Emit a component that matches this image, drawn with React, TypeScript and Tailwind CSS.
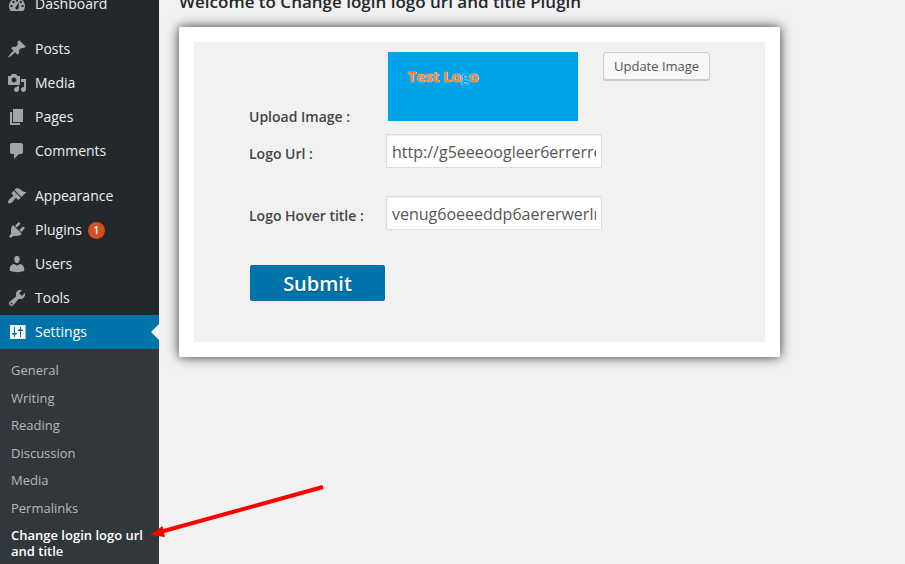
import type { ReactNode } from "react";

type Item = { label: string; icon: ReactNode; badge?: string; active?: boolean };

const groups: Item[][] = [
  [
    {
      label: "Dashboard",
      icon: (
        <path
          fillRule="evenodd"
          d="M3.76 17h12.480A7.950 7.950 0 0 0 18 12c0-4.420-3.580-8-8-8s-8 3.580-8 8c0 1.880.65 3.630 1.760 5zM9 5.500h2v2H9zM5.500 7h2v2h-2zM12.800 7h2v2h-2zM3.500 11h2v2h-2zM14.500 11h2v2h-2zM12 8.500l-.4 5.200c0 1-.7 1.800-1.600 1.800s-1.600-.8-1.600-1.600c0-.6.2-1 .6-1.300z"
        />
      ),
    },
  ],
  [
    {
      label: "Posts",
      icon: (
        <path d="M10.440 3.020l1.820-1.820 6.360 6.350-1.830 1.820c-1.050-.68-2.480-.57-3.410.36l-.75.75c-.92.93-1.040 2.350-.35 3.410l-1.830 1.820-2.410-2.410-2.800 2.790c-.42.42-3.380 2.710-3.800 2.290s1.860-3.390 2.280-3.810l2.790-2.790L4.100 9.360l1.830-1.820c1.050.69 2.480.57 3.400-.36l.75-.75c.93-.92 1.050-2.350.36-3.410z" />
      ),
    },
    {
      label: "Media",
      icon: (
        <path d="M13 11V4c0-.55-.45-1-1-1h-1.670L9 1H5L3.670 3H2c-.55 0-1 .45-1 1v7c0 .55.45 1 1 1h10c.55 0 1-.45 1-1zM7 4.500c1.380 0 2.500 1.120 2.500 2.500S8.380 9.500 7 9.500 4.500 8.380 4.500 7 5.620 4.500 7 4.500zM14 6h5v10.500c0 1.380-1.120 2.500-2.500 2.500S14 17.880 14 16.500s1.120-2.500 2.500-2.500c.17 0 .34.02.5.05V9h-3V6zm-4 8.050V13h2v3.500c0 1.380-1.120 2.500-2.500 2.500S7 17.880 7 16.500 8.120 14 9.500 14c.17 0 .34.02.5.05z" />
      ),
    },
    { label: "Pages", icon: <path d="M6 15V2h10v13H6zm-1 1h8v2H3V5h2v11z" /> },
    {
      label: "Comments",
      icon: (
        <path d="M5 2h9c1.100 0 2 .9 2 2v7c0 1.100-.9 2-2 2h-2l-5 5v-5H5c-1.100 0-2-.9-2-2V4c0-1.100.9-2 2-2z" />
      ),
    },
  ],
  [
    {
      label: "Appearance",
      icon: (
        <path d="M14.480 11.060L7.410 3.990l1.500-1.500c.5-.56 2.300-.47 3.510.32 1.210.8 1.430 1.280 2.910 2.100 1.180.64 2.450 1.260 4.450.85zm-.71.71L6.700 4.700 4.930 6.470c-.39.39-.39 1.020 0 1.410l1.060 1.060c.39.39.39 1.030 0 1.420-.6.6-1.430 1.110-2.210 1.690-.35.26-.7.53-1.010.84C1.430 14.230.4 16.080 1.400 17.070c.99 1 2.840-.03 4.180-1.360.31-.31.58-.66.85-1.020.57-.78 1.080-1.610 1.690-2.210.39-.39 1.020-.39 1.410 0l1.060 1.060c.39.39 1.020.39 1.410 0z" />
      ),
    },
    {
      label: "Plugins",
      badge: "1",
      icon: (
        <path d="M13.110 4.360L9.870 7.600 8 5.730l3.240-3.240c.35-.34 1.050-.2 1.560.32.52.51.66 1.210.31 1.550zm-8 1.770l.91-1.120 9.010 9.010-1.190.84c-.71.71-2.630 1.160-3.820 1.160H6.140L4.900 17.260c-.59.59-1.540.59-2.120 0-.59-.58-.59-1.530 0-2.120l1.240-1.240v-3.880c0-1.130.4-3.190 1.090-3.890zm7.260 3.970l3.240-3.240c.34-.35 1.040-.21 1.550.31.52.51.66 1.210.31 1.550l-3.240 3.250z" />
      ),
    },
    {
      label: "Users",
      icon: (
        <path d="M10 9.250c-2.270 0-2.730-3.440-2.730-3.440C7 4.020 7.820 2 9.970 2c2.160 0 2.980 2.020 2.710 3.810 0 0-.41 3.440-2.680 3.440zm0 2.570L12.720 10c2.390 0 4.520 2.330 4.520 4.530v2.490s-3.650 1.130-7.240 1.130c-3.650 0-7.240-1.130-7.240-1.130v-2.490c0-2.250 1.940-4.480 4.470-4.480z" />
      ),
    },
    {
      label: "Tools",
      icon: (
        <path d="M16.680 9.770c-1.340 1.340-3.300 1.670-4.950.99l-5.410 6.520c-.99.99-2.590.99-3.580 0s-.99-2.590 0-3.570l6.520-5.420c-.68-1.650-.35-3.610.99-4.950 1.280-1.280 3.120-1.620 4.720-1.060l-2.890 2.890 2.820 2.820 2.860-2.870c.53 1.580.18 3.390-1.080 4.650zM3.810 16.210c.4.39 1.040.39 1.430 0 .4-.4.4-1.040 0-1.430-.39-.4-1.030-.4-1.430 0-.39.39-.39 1.030 0 1.430z" />
      ),
    },
    {
      label: "Settings",
      active: true,
      icon: (
        <path
          fillRule="evenodd"
          d="M3 3h15.500v14H3zM7 5h1v6h2v1l-2 1v2H7v-2l-2-1v-1h2zM13 15h1V9h2V8l-2-1V5h-1v2l-2 1v1h2z"
        />
      ),
    },
  ],
];

const settingsPages = ["General", "Writing", "Reading", "Discussion", "Media", "Permalinks"];

function MenuItem({ label, icon, badge, active }: Item) {
  return (
    <li>
      <a
        href="#"
        className={
          "relative flex h-[34px] items-center pl-[7px] text-sm " +
          (active ? "bg-[#0073aa] text-white" : "text-[#eeeeee]")
        }
      >
        <svg
          viewBox="0 0 20 20"
          aria-hidden="true"
          className={"mr-2 size-5 shrink-0 " + (active ? "fill-white" : "fill-[#a0a5aa]")}
        >
          {icon}
        </svg>
        {label}
        {badge && (
          <span className="ml-1.5 flex size-[17px] items-center justify-center rounded-full bg-[#d54e21] text-[10px] font-semibold text-white">
            {badge}
          </span>
        )}
        {active && (
          <span className="absolute top-1/2 right-0 -translate-y-1/2 border-8 border-l-0 border-transparent border-r-[#f1f1f1]" />
        )}
      </a>
    </li>
  );
}

function Sidebar() {
  return (
    <nav className="flex w-[159px] shrink-0 flex-col bg-[#23282d]">
      <div className="-mt-[13px] flex flex-col gap-[11px]">
        {groups.map((items, i) => (
          <ul key={i}>
            {items.map((item) => (
              <MenuItem key={item.label} {...item} />
            ))}
          </ul>
        ))}
      </div>
      <div className="grow bg-[#32373c] px-[11px] pt-[13px] text-[13px] leading-4 text-[#b4b9be]">
        <ul className="flex min-h-[197px] flex-col justify-between">
          {settingsPages.map((page) => (
            <li key={page}>
              <a href="#" className="block">
                {page}
              </a>
            </li>
          ))}
          <li>
            <a href="#" className="block font-semibold text-white">
              Change login logo url and title
            </a>
          </li>
        </ul>
      </div>
    </nav>
  );
}

const labelClass = "w-[137px] shrink-0 text-sm font-semibold text-[#444444]";
const inputClass =
  "h-[34px] w-[216px] border border-[#dddddd] bg-white px-[5px] pt-0.5 text-base text-[#555555] shadow-[inset_0_1px_2px_rgba(0,0,0,0.07)] outline-none";

export default function App() {
  return (
    <div className="relative flex h-screen overflow-hidden bg-[#f1f1f1] font-['Open_Sans',sans-serif]">
      <Sidebar />
      <main className="min-w-0 grow px-5">
        <h3 className="-mt-2 text-[17px] leading-5 font-semibold text-[#23282d]">
          Welcome to Change login logo url and title Plugin
        </h3>
        <div className="mt-[15px] max-w-[601px] rounded-[2px] bg-white p-[15px] shadow-[0_0_12px_#333333]">
          <form
            className="bg-[#f1f1f1] pt-[10px] pb-[41px] pl-[55px]"
            onSubmit={(e) => e.preventDefault()}
          >
            <div className="flex items-end">
              <label htmlFor="upload" className={labelClass + " -mb-1.5"}>
                Upload Image :
              </label>
              <div className="flex items-start gap-[25px] pl-0.5">
                <div className="h-[69px] w-[190px] bg-[#00a2e8] px-5 pt-[14px] text-[15px] leading-5 font-bold text-[#ff7f27] [text-shadow:0_0_1px_#ffffff,0_0_1px_#ffffff]">
                  Test Lo<span className="text-[#00a2e8]">g</span>o
                </div>
                <button
                  id="upload"
                  type="button"
                  className="h-7 rounded-[3px] border border-[#cccccc] bg-[#f7f7f7] px-[10px] pt-0.5 text-[13px] text-[#555555] shadow-[0_1px_0_#cccccc]"
                >
                  Update Image
                </button>
              </div>
            </div>
            <div className="mt-[13px] flex items-center">
              <label htmlFor="logo-url" className={labelClass + " pt-1.5"}>
                Logo Url :
              </label>
              <input
                id="logo-url"
                type="text"
                defaultValue="http://g5eeeoogleer6errerrerr"
                className={inputClass}
              />
            </div>
            <div className="mt-7 flex items-center">
              <label htmlFor="logo-title" className={labelClass + " pt-1.5"}>
                Logo Hover title :
              </label>
              <input
                id="logo-title"
                type="text"
                defaultValue="venug6oeeeddp6aererwerlner"
                className={inputClass}
              />
            </div>
            <button
              type="submit"
              className="mt-[35px] ml-px block h-9 w-[135px] rounded-[2px] bg-[#0073aa] pt-0.5 text-xl font-semibold text-white [text-shadow:0_1px_1px_#005580]"
            >
              Submit
            </button>
          </form>
        </div>
      </main>
      <svg
        viewBox="0 0 180 60"
        aria-hidden="true"
        className="absolute top-[480px] left-[148px] h-[60px] w-[180px] fill-none"
      >
        <path d="M175 7L14 51.500" stroke="#ff0000" strokeWidth="4" />
        <path d="M2 55l12.500-9 2.500 11z" fill="#ff0000" />
      </svg>
    </div>
  );
}
